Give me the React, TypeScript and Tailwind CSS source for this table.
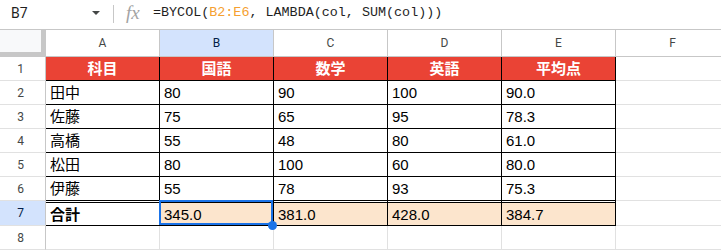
import React from "react";

const data: string[][] = [
  ["科目", "国語", "数学", "英語", "平均点"],
  ["田中", "80", "90", "100", "90.0"],
  ["佐藤", "75", "65", "95", "78.3"],
  ["高橋", "55", "48", "80", "61.0"],
  ["松田", "80", "100", "60", "80.0"],
  ["伊藤", "55", "78", "93", "75.3"],
  ["合計", "345.0", "381.0", "428.0", "384.7"],
];

const letters = ["A", "B", "C", "D", "E", "F"];

function DataCell({ r, c, text }: { r: number; c: number; text: string }) {
  if (r === 0) {
    return (
      <div className="bg-[#ea4335] border-r border-b border-black flex items-center justify-center text-white font-bold text-[15px] leading-[17px]">
        {text}
      </div>
    );
  }
  if (r === 6) {
    const bold = c === 0;
    return (
      <div
        className={
          "relative border-r border-b border-black flex items-center pl-[4px] pt-[2px] text-[15px] leading-[17px] text-black shadow-[inset_0_1px_0_#ffffff,inset_0_2px_0_#000000] " +
          (c === 0 ? "bg-white font-bold" : "bg-[#fce5cd]")
        }
      >
        {bold ? text : text}
        {c === 1 && (
          <>
            <div className="absolute -left-px -top-px right-0 bottom-0 border-2 border-[#1a73e8] pointer-events-none" />
            <div className="absolute right-[-4px] bottom-[-5px] w-[9px] h-[9px] rounded-full bg-[#1a73e8] z-10" />
          </>
        )}
      </div>
    );
  }
  return (
    <div className="bg-white border-r border-b border-black flex items-center pl-[4px] text-[15px] leading-[17px] text-black">
      {text}
    </div>
  );
}

export default function App() {
  return (
    <div className="w-[721px] h-[251px] overflow-hidden bg-white font-['Liberation_Sans','Noto_Sans_CJK_JP',sans-serif]">
      {/* formula bar */}
      <div className="h-[30px] border-b border-[#c7c7c7] flex items-start">
        <div className="w-[113px] h-[25px] flex items-center pl-[11px] pr-[13px]">
          <span className="flex-1 font-['Roboto',sans-serif] text-[14px] leading-[16px] text-[#1f1f1f]">B7</span>
          <svg width="8" height="4" viewBox="0 0 8 4">
            <path d="M0 0h8L4 4z" fill="#444746" />
          </svg>
        </div>
        <div className="w-px h-[18px] mt-[5px] bg-[#c7c7c7]" />
        <div className="w-[39px] h-[25px] flex items-center pl-[12px]">
          <span className="font-['Liberation_Serif',serif] italic text-[19px] leading-[19px] text-[#a3a3a3]">fx</span>
        </div>
        <div className="h-[25px] flex items-center font-['Liberation_Mono',monospace] text-[13.4px] leading-[16px] text-[#1f1f1f] whitespace-pre">
          =BYCOL(<span className="text-[#f5a030]">B2:E6</span>, LAMBDA(col, SUM(col)))
        </div>
      </div>

      {/* grid */}
      <div className="grid w-max grid-cols-[46px_114px_114px_114px_114px_114px_114px] grid-rows-[27px_24px_24px_24px_24px_24px_24px_25px_24px]">
        {/* header row */}
        <div className="bg-[#f8f9fa] border-r border-b border-[#c7c7c7] shadow-[inset_-4px_-4px_0_#c7c7c7]" />
        {letters.map((l) => (
          <div
            key={l}
            className={
              "border-r border-b border-[#c7c7c7] flex items-center justify-center font-['Roboto',sans-serif] text-[12px] " +
              (l === "B" ? "bg-[#d3e3fd] text-[#041e49]" : "bg-white text-[#444746]")
            }
          >
            {l}
          </div>
        ))}

        {data.map((row, r) => (
          <React.Fragment key={r}>
            <div
              className={
                "border-r border-[#c7c7c7] flex items-center justify-center pr-[4px] font-['Roboto',sans-serif] text-[12px] " +
                (r === 6
                  ? "bg-[#d3e3fd] text-[#041e49] border-b border-b-[#e1e1e1]"
                  : "bg-white text-[#444746] border-b border-b-[#e1e1e1]")
              }
            >
              {r + 1}
            </div>
            {row.map((t, c) => (
              <DataCell key={c} r={r} c={c} text={t} />
            ))}
            <div className="bg-white border-b border-[#e1e1e1]" />
          </React.Fragment>
        ))}

        {/* row 8 */}
        <div className="border-r border-[#c7c7c7] border-b border-b-[#e1e1e1] flex items-center justify-center pr-[4px] font-['Roboto',sans-serif] text-[12px] text-[#444746]">
          8
        </div>
        {[0, 1, 2, 3, 4].map((i) => (
          <div key={i} className="border-r border-b border-[#e1e1e1]" />
        ))}
        <div className="border-b border-[#e1e1e1]" />
      </div>
    </div>
  );
}
